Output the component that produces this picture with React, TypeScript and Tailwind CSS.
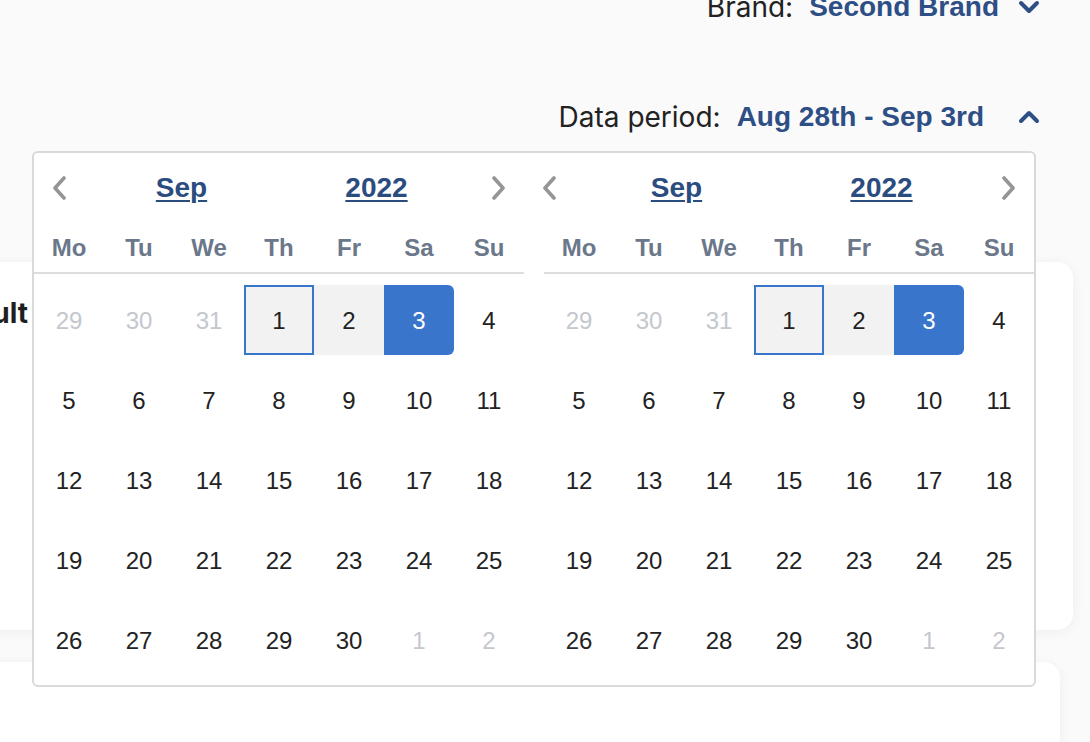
import React from "react";

const SANS = "font-['Liberation_Sans',Arial,sans-serif]";

type Day = { n: number; muted?: boolean };

const days: Day[] = [
  { n: 29, muted: true },
  { n: 30, muted: true },
  { n: 31, muted: true },
  ...Array.from({ length: 30 }, (_, i) => ({ n: i + 1 })),
  { n: 1, muted: true },
  { n: 2, muted: true },
];

const weekdays = ["Mo", "Tu", "We", "Th", "Fr", "Sa", "Su"];

function NavArrow({ dir }: { dir: "left" | "right" }) {
  return (
    <svg width="14" height="26" viewBox="0 0 14 26" fill="none">
      <polyline
        points={dir === "left" ? "12,3 3,13 12,23" : "2,3 11,13 2,23"}
        stroke="#959595"
        strokeWidth="3.6"
        strokeLinecap="round"
        strokeLinejoin="round"
      />
    </svg>
  );
}

function Chevron({ up }: { up?: boolean }) {
  return (
    <svg width="22" height="14" viewBox="0 0 22 14" fill="none">
      <polyline
        points={up ? "3,11 11,3 19,11" : "3,3 11,11 19,3"}
        stroke="#2d4f86"
        strokeWidth="4"
        strokeLinecap="round"
        strokeLinejoin="round"
      />
    </svg>
  );
}

function DayCell({ d }: { d: Day }) {
  const inRange = !d.muted && (d.n === 1 || d.n === 2 || d.n === 3);
  let cls =
    "h-[70px] my-[5px] pt-[2px] flex items-center justify-center text-[24px] ";
  if (d.muted) cls += "text-[#c4c7ce]";
  else if (inRange && d.n === 1)
    cls += "text-[#222] bg-[#f2f2f2] border-2 border-[#3a75cc]";
  else if (inRange && d.n === 2) cls += "text-[#222] bg-[#f2f2f2]";
  else if (inRange && d.n === 3)
    cls += "text-white bg-[#3a75cc] rounded-r-[6px]";
  else cls += "text-[#222]";
  return <div className={cls}>{d.n}</div>;
}

function Month({ wide }: { wide?: boolean }) {
  return (
    <div className={wide ? "w-[510px]" : "w-[490px]"}>
      <div className="h-[70px] flex items-center">
        <div className="w-[50px] flex justify-center">
          <NavArrow dir="left" />
        </div>
        <div className="flex-1 flex">
          <div className="flex-1 text-center text-[28px] font-bold underline underline-offset-[3px] decoration-2 text-[#2b4c7f]">
            Sep
          </div>
          <div className="flex-1 text-center text-[28px] font-bold underline underline-offset-[3px] decoration-2 text-[#2b4c7f]">
            2022
          </div>
        </div>
        <div className="w-[50px] flex justify-center">
          <NavArrow dir="right" />
        </div>
      </div>
      <div className={wide ? "ml-[20px]" : ""}>
        <div className="h-[51px] grid grid-cols-7 items-center border-b-2 border-[#dddddd]">
          {weekdays.map((w) => (
            <div
              key={w}
              className="text-center text-[24px] font-bold text-[#6b778a]"
            >
              {w}
            </div>
          ))}
        </div>
        <div className="pt-[6px] grid grid-cols-7">
          {days.map((d, i) => (
            <DayCell key={i} d={d} />
          ))}
        </div>
      </div>
    </div>
  );
}

export default function App() {
  return (
    <div
      className={`relative w-[1090px] h-[742px] overflow-hidden bg-[#fafafa] ${SANS}`}
    >
      <div className="flex flex-col items-end pr-[50px]">
        <div className="-mt-[13px] h-[40px] flex items-center">
          <span className="font-['Inter',sans-serif] text-[28px] text-[#222]">
            Brand:
          </span>
          <span className="ml-[16px] text-[28px] font-bold text-[#2d4f86]">
            Second Brand
          </span>
          <span className="ml-[19px] flex items-center">
            <Chevron />
          </span>
        </div>
        <div className="mt-[70px] h-[40px] flex items-center">
          <span className="font-['Inter',sans-serif] text-[28px] text-[#222]">
            Data period:
          </span>
          <span className="ml-[16px] text-[28px] font-bold text-[#2d4f86]">
            Aug 28th - Sep 3rd
          </span>
          <span className="ml-[34px] flex items-center">
            <Chevron up />
          </span>
        </div>
      </div>

      <div className="mt-[125px] -ml-[200px] w-[1273px] h-[368px] bg-white rounded-[16px] shadow-[0_2px_14px_rgba(0,0,0,0.05)]">
        <div className="pt-[34px] w-[228px] text-right text-[28px] font-bold text-[#1f1f1f] leading-[34px] font-['Inter',sans-serif]">
          Default
        </div>
      </div>
      <div className="mt-[32px] -ml-[200px] w-[1260px] h-[200px] bg-white rounded-[16px] shadow-[0_2px_14px_rgba(0,0,0,0.05)]" />

      <div className="absolute left-[32px] top-[151px] w-[1004px] bg-white border-2 border-[#d9d9d9] rounded-[6px] pb-[5px]">
        <div className="flex">
          <Month />
          <Month wide />
        </div>
      </div>
    </div>
  );
}
